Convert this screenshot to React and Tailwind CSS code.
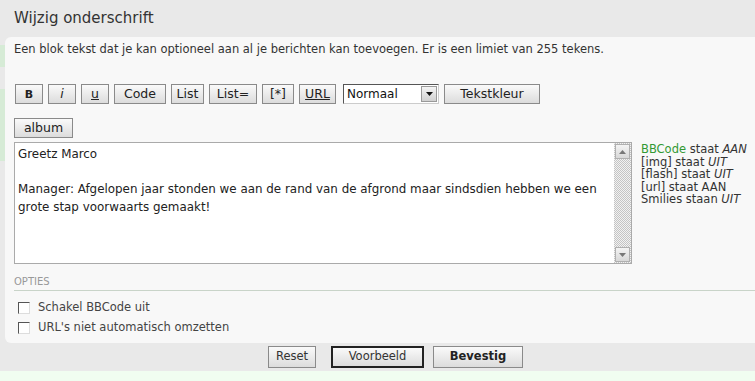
import React from 'react';

const font = { fontFamily: '"DejaVu Sans", Verdana, sans-serif' };

const Btn = ({ children, className = '' }) => (
  <button
    className={`h-[20px] border border-[#8a8a8a] bg-gradient-to-b from-[#fafafa] to-[#dcdcdc] text-[#222] leading-none px-1 ${className}`}
  >
    {children}
  </button>
);

const Check = ({ label }) => (
  <label className="flex items-center gap-[8px] h-[20px] pl-[4px] text-[11.5px] text-[#444]">
    <span className="w-[12px] h-[12px] bg-white border border-t-[#555] border-l-[#555] border-r-[#ddd] border-b-[#ddd]" />
    {label}
  </label>
);

const Arrow = ({ up }) => (
  <div className="w-[15px] h-[15px] bg-gradient-to-b from-[#f4f4f4] to-[#d8d8d8] border border-[#b0b0b0] flex items-center justify-center">
    <svg width="7" height="4" viewBox="0 0 7 4">
      <path d={up ? 'M0 4 L3.5 0 L7 4 Z' : 'M0 0 L3.5 4 L7 0 Z'} fill="#777" />
    </svg>
  </div>
);

export default function App() {
  return (
    <div className="w-[755px] h-[381px] bg-[#e9e9e9] overflow-hidden flex flex-col text-[#333]" style={font}>
      {/* Header */}
      <div className="h-[37px] flex items-center pl-[14px] text-[15px] text-[#333]">Wijzig onderschrift</div>

      <div className="flex h-[306px]">
        {/* left edge strips */}
        <div className="w-[5px] flex flex-col">
          <div className="h-[8px]" />
          <div className="h-[22px] bg-[#d6ebd6]" />
          <div className="h-[22px]" />
          <div className="h-[72px] bg-[#d6ebd6]" />
        </div>

        {/* Panel */}
        <div className="flex-1 bg-[#f8f8f8] rounded-l-[6px] pl-[9px] flex flex-col">
          <div className="pt-[5px] text-[11.5px] h-[20px] leading-[14px] whitespace-nowrap">
            Een blok tekst dat je kan optioneel aan al je berichten kan toevoegen. Er is een limiet van 255 tekens.
          </div>

          {/* Toolbar */}
          <div className="flex items-center mt-[27px] gap-[5px] pl-[1px] text-[12.5px]">
            <Btn className="w-[28px] font-bold text-[11px]">B</Btn>
            <Btn className="w-[28px] italic">i</Btn>
            <Btn className="w-[28px] underline">u</Btn>
            <Btn className="w-[52px]">Code</Btn>
            <Btn className="w-[33px]">List</Btn>
            <Btn className="w-[48px]">List=</Btn>
            <Btn className="w-[32px]">[*]</Btn>
            <Btn className="w-[37px] underline">URL</Btn>
            <div className="ml-[2px] w-[96px] h-[20px] bg-white border border-t-[#555] border-l-[#555] border-r-[#ccc] border-b-[#ccc] flex items-center justify-between pl-[3px] pr-[1px]">
              <span className="text-[12px] text-[#111]">Normaal</span>
              <span className="w-[16px] h-[16px] bg-gradient-to-b from-[#f4f4f4] to-[#d0d0d0] border border-[#999] flex items-center justify-center">
                <svg width="7" height="4" viewBox="0 0 7 4">
                  <path d="M0 0 L3.5 4 L7 0 Z" fill="#111" />
                </svg>
              </span>
            </div>
            <Btn className="w-[96px]">Tekstkleur</Btn>
          </div>

          <div className="mt-[11px]">
            <Btn className="w-[59px] text-[12.5px]">album</Btn>
          </div>

          {/* Textarea + info */}
          <div className="flex mt-[3px]">
            <div className="w-[618px] h-[122px] bg-white border border-[#aaa] flex">
              <div className="flex-1 pl-[3px] pt-[3px] text-[11.9px] leading-[17.5px] text-[#222] whitespace-nowrap">
                <div>Greetz Marco</div>
                <div>&nbsp;</div>
                <div>Manager: Afgelopen jaar stonden we aan de rand van de afgrond maar sindsdien hebben we een</div>
                <div>grote stap voorwaarts gemaakt!</div>
              </div>
              <div className="w-[17px] flex flex-col items-center justify-between py-[1px] bg-[repeating-conic-gradient(#c4c4c4_0_25%,#f2f2f2_0_50%)] bg-[length:2px_2px]">
                <Arrow up />
                <Arrow />
              </div>
            </div>
            <div className="pl-[9px] pt-[1px] text-[11.5px] leading-[12.5px] text-[#333] whitespace-nowrap">
              <div><span className="text-[#339933]">BBCode</span> staat <i>AAN</i></div>
              <div>[img] staat <i>UIT</i></div>
              <div>[flash] staat <i>UIT</i></div>
              <div>[url] staat AAN</div>
              <div>Smilies staan <i>UIT</i></div>
            </div>
          </div>

          {/* Options */}
          <div className="mt-[10px] text-[10px] text-[#999] h-[17px] border-b border-[#c9d4c9]">OPTIES</div>
          <div className="mt-[7px] flex flex-col">
            <Check label="Schakel BBCode uit" />
            <Check label="URL's niet automatisch omzetten" />
          </div>
        </div>
      </div>

      {/* Footer buttons */}
      <div className="h-[28px] flex items-center pl-[268px] text-[11.5px]">
        <Btn className="w-[48px] h-[22px] text-[#333]">Reset</Btn>
        <Btn className="ml-[15px] w-[93px] h-[22px] border-2 border-[#222] text-[#333]">Voorbeeld</Btn>
        <Btn className="ml-[9px] w-[90px] h-[22px] font-bold">Bevestig</Btn>
      </div>
      <div className="flex-1 bg-[#f0fdf0]" />
    </div>
  );
}
